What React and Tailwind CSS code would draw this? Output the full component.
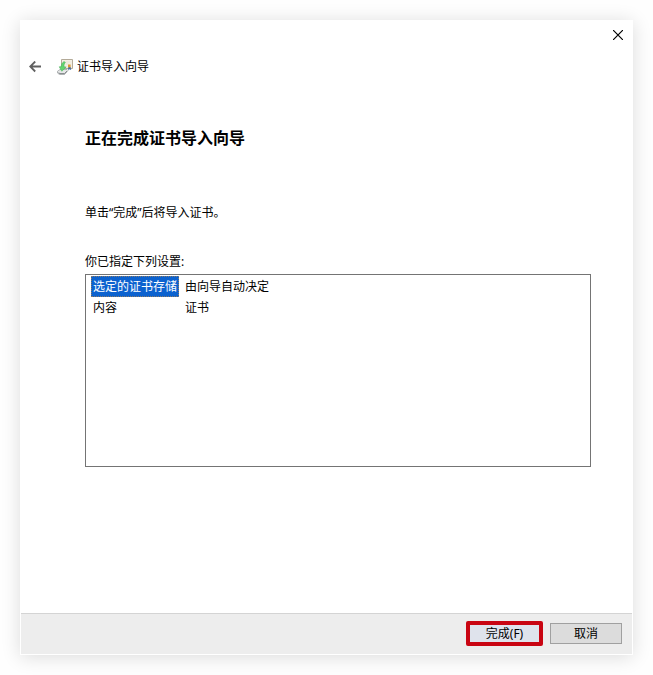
import React, { useState } from 'react';

const settings = [
  { name: '选定的证书存储', value: '由向导自动决定' },
  { name: '内容', value: '证书' },
];

const BackIcon = () => (
  <svg width="12" height="12" viewBox="0 0 12 12" fill="none" stroke="#606060" strokeWidth="1.8" aria-hidden="true">
    <path d="M12 5.5H1.5M6.2 .5L1.2 5.5L6.2 10.5" />
  </svg>
);

const CloseIcon = () => (
  <svg width="10" height="10" viewBox="0 0 10 10" fill="none" stroke="#000" strokeWidth="1.2" aria-hidden="true">
    <path d="M0 0L10 10M10 0L0 10" />
  </svg>
);

// Certificate with a seal, a green arrow and a drive underneath
const WizardIcon = () => (
  <svg width="16" height="16" viewBox="0 0 16 16" aria-hidden="true">
    <path d="M4.5.5h11v9h-11z" fill="#f3eee3" stroke="#b3aa98" />
    <path d="M7.5 3h6M8.5 5h3" stroke="#e9e3d6" />
    <path d="M11.3 8l-.3 3 1.3-.8 1.9.8-.6-3z" fill="#44699f" />
    <path d="M11 5.5h2.6v2.8H11z" fill="#d99a32" />
    <path d="M.5 12.2L3 10.5h7l1 1-3.5 4H2.5L.5 14z" fill="#e6e8e8" stroke="#989c9e" strokeWidth=".7" />
    <path d="M1.5 13.8l1.5.8h4.5L10 12.2" fill="none" stroke="#666b6e" strokeWidth=".8" />
    <path d="M7 2.5C4.8 4 4.2 5.5 4.3 7.6L2.2 7.8 4.8 12.3 9.2 8 7.1 7.8C6.9 6 7.2 4.6 8.4 3.4z" fill="#62d46f" stroke="#45ac57" strokeWidth=".5" />
  </svg>
);

const App = () => {
  const [selected, setSelected] = useState(0);

  return (
    <div className="flex min-h-screen bg-[#fefefe] p-5 font-['Noto_Sans','Noto_Sans_CJK_SC',sans-serif] text-xs text-black">
      <main className="flex flex-1 flex-col border border-white bg-white shadow-[0_2px_18px_rgba(0,0,0,0.14)]">
        <div className="flex justify-end px-[5px] pt-[5px]">
          <button type="button" aria-label="关闭" className="p-1">
            <CloseIcon />
          </button>
        </div>

        <header className="mt-[13px] flex items-center px-2">
          <button type="button" aria-label="返回" className="mr-4">
            <BackIcon />
          </button>
          <WizardIcon />
          <span className="ml-1 leading-5">证书导入向导</span>
        </header>

        <section className="flex flex-1 flex-col pr-[41px] pl-16">
          <h1 className="mt-[49px] text-base leading-6 font-bold">正在完成证书导入向导</h1>
          <p className="mt-[55px] leading-4">单击“完成”后将导入证书。</p>
          <h2 className="mt-[31px] leading-5">你已指定下列设置:</h2>
          <div className="mt-0.5 h-[193px] border border-[#747474] bg-white pt-px pl-[5px]">
            <table className="border-separate border-spacing-0 leading-[17px]">
              <tbody>
                {settings.map((item, index) => (
                  <tr key={item.name} onClick={() => setSelected(index)}>
                    <td
                      className={`border p-px whitespace-nowrap ${
                        selected === index
                          ? 'border-dotted border-[#8a7a68] bg-[#0c62cf] text-white'
                          : 'border-transparent'
                      }`}
                    >
                      {item.name}
                    </td>
                    <td className="pl-1.5 whitespace-nowrap">{item.value}</td>
                  </tr>
                ))}
              </tbody>
            </table>
          </div>
        </section>

        <footer className="flex items-center justify-end gap-[7px] border-t border-[#d4d4d4] bg-[#ededed] pt-[7px] pr-2.5 pb-2">
          <button type="button" className="h-[25px] w-[77px] rounded-xs border-4 border-[#c90512] bg-[#dfe3ec] leading-4">
            完成(F)
          </button>
          <button type="button" className="h-[21px] w-[72px] border border-[#a0a0a0] bg-[#dcdcdc] leading-4">
            取消
          </button>
        </footer>
      </main>
    </div>
  );
};

export default App;
